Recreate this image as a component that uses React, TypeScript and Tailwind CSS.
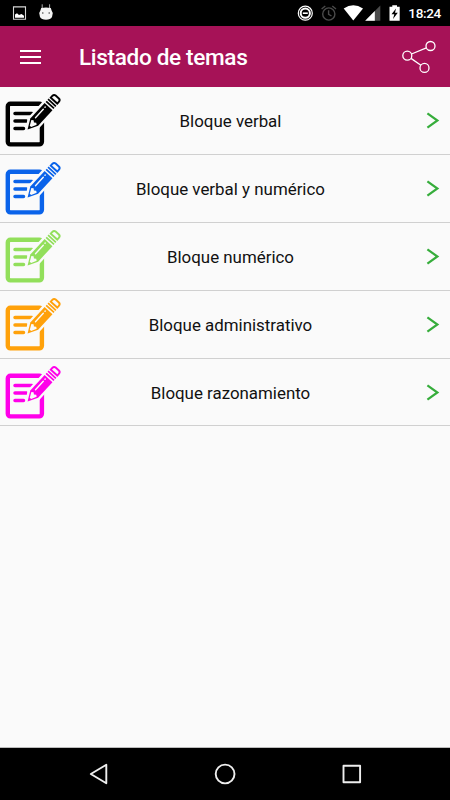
const topics = [
  { title: 'Bloque verbal', color: '#000000' },
  { title: 'Bloque verbal y numérico', color: '#0a63ea' },
  { title: 'Bloque numérico', color: '#92df5b' },
  { title: 'Bloque administrativo', color: '#ffa10a' },
  { title: 'Bloque razonamiento', color: '#ff00ea' },
];

function NoteIcon({ color }: { color: string }) {
  return (
    <svg width="66" height="67" viewBox="0 0 66 67" fill="none" className="shrink-0">
      <rect x="7.8" y="16.8" width="34.1" height="40.6" rx="2.6" stroke={color} strokeWidth="4.4" />
      <path d="M15 26.6H32M15 34.1H26.5M15 41.6H23.5" stroke={color} strokeWidth="3.5" strokeLinecap="round" />
      <g transform="translate(27.6 42.4) rotate(-47.5)">
        <path d="M-2.5 0L8 -7.6H46V7.6H8Z" fill="#fafafa" />
        <path d="M0 0L9.8 -5.3H31V5.3H9.8Z" fill={color} />
        <path d="M4.2 -0.9L9.5 -3.6L10.8 -1.8L9.4 0L10.8 1.8L9.5 3.6L4.2 0.9Z" fill="#fafafa" />
        <path d="M14 -2.1H25.5M28 -2.1H28.4" stroke="#fafafa" strokeWidth="1.4" strokeLinecap="round" />
        <path d="M33.3 -5.3V5.3M36.1 -5.3V5.3" stroke={color} strokeWidth="1.7" />
        <path d="M39.1 -4.4H41.4Q43.9 -4.4 43.9 -2.2V2.2Q43.9 4.4 41.4 4.4H39.1Z" stroke={color} strokeWidth="1.9" />
      </g>
    </svg>
  );
}

function StatusBar() {
  return (
    <div className="h-[26px] shrink-0 bg-black">
      <svg width="450" height="26" viewBox="0 0 450 26" fill="none">
        <path d="M13.5 6.9H25.5V19.3H13.5Z" stroke="#d6d6d6" strokeWidth="1.1" />
        <path d="M15 17.8V14.5L17 13.2L19 15.1L21.5 14L24 15.8V17.8Z" fill="#fff" />
        <path d="M42.2 4.3V8M49.6 4.3V8" stroke="#aaa" />
        <path d="M41.2 8Q46 7.2 50.8 8L51.6 10.5L52.8 13L52 17Q50.5 19.8 46 19.8Q41.5 19.8 40 17L39.2 13L40.4 10.5Z" fill="#f3f3f3" />
        <circle cx="42.8" cy="13" r="0.8" fill="#444" />
        <circle cx="49.2" cy="13" r="0.8" fill="#444" />
        <circle cx="305.3" cy="13.2" r="7" stroke="#fff" strokeWidth="1.2" />
        <circle cx="305.3" cy="13.2" r="4.6" stroke="#fff" strokeWidth="2" />
        <path d="M302.8 13.2H307.8" stroke="#fff" strokeWidth="1.6" />
        <g stroke="#4b4b4b" strokeWidth="1.4">
          <circle cx="328.8" cy="14" r="6.1" />
          <path d="M328.6 10.2V14.3L331.5 16M321.6 9L325.3 6M336 9L332.3 6" />
        </g>
        <path d="M343.7 8.5Q353.3 1.8 363 8.5L353.3 20.6Z" fill="#fff" />
        <path d="M380.3 5.5V20.7H365.2Z" fill="#4b4b4b" />
        <path d="M374.8 11V20.7H365.2Z" fill="#fff" />
        <path d="M389.5 6.7H392.3V5.2H397V6.7H399.7V20.7H389.5Z" fill="#fff" />
        <path d="M396 8.5L391.5 14.3H394.3L393 19L397.8 12.7H395Z" fill="#000" />
        <text x="408.3" y="18.3" fill="#fff" fontSize="13.6" fontWeight="500" fontFamily="Roboto, sans-serif" textLength="33">18:24</text>
      </svg>
    </div>
  );
}

export default function App() {
  return (
    <div className="flex h-[800px] w-[450px] flex-col overflow-hidden bg-[#fafafa] font-['Roboto',sans-serif]">
      <StatusBar />
      <header className="flex h-[61px] shrink-0 items-center bg-[#a61257] pr-[13px] pl-5">
        <svg width="21" height="16" viewBox="0 0 21 16" fill="none">
          <path d="M0 2H21M0 8H21M0 14H21" stroke="#fff" strokeWidth="2" />
        </svg>
        <h1 className="ml-[38px] flex-1 pt-[2px] text-[22.6px] leading-7 font-medium tracking-[-0.35px] text-white">Listado de temas</h1>
        <svg width="35" height="34" viewBox="0 0 35 34" fill="none" stroke="#fff" strokeWidth="1.3">
          <circle cx="5.3" cy="15.7" r="4.5" />
          <circle cx="28.5" cy="6" r="4.5" />
          <circle cx="22.5" cy="27.9" r="4.5" />
          <path d="M9.5 14L24.4 7.8M9 18.4L18.9 25.2" />
        </svg>
      </header>
      <main className="flex-1">
        {topics.map((topic) => (
          <div key={topic.title} className="flex h-[67.9px] items-center border-b border-[#d0d0d0]">
            <NoteIcon color={topic.color} />
            <span className="flex-1 pt-[2px] pl-px text-center text-[16.9px] leading-6 text-[#111]">{topic.title}</span>
            <svg width="56" height="20" viewBox="0 0 56 20" fill="none" className="shrink-0">
              <path d="M33.4 3.4L43.4 10.5L33.4 17.6" stroke="#36ad3b" strokeWidth="2.2" />
            </svg>
          </div>
        ))}
      </main>
      <nav className="h-[53px] shrink-0 border-t border-[#bbb] bg-black">
        <svg width="450" height="52" viewBox="0 748 450 52" fill="none" stroke="#eee" strokeWidth="1.9" strokeLinejoin="round">
          <path d="M90.8 774L106.3 764.8V783.2Z" />
          <circle cx="225.1" cy="774" r="9.4" />
          <rect x="343.5" y="765.8" width="16.6" height="16.4" />
        </svg>
      </nav>
    </div>
  );
}
